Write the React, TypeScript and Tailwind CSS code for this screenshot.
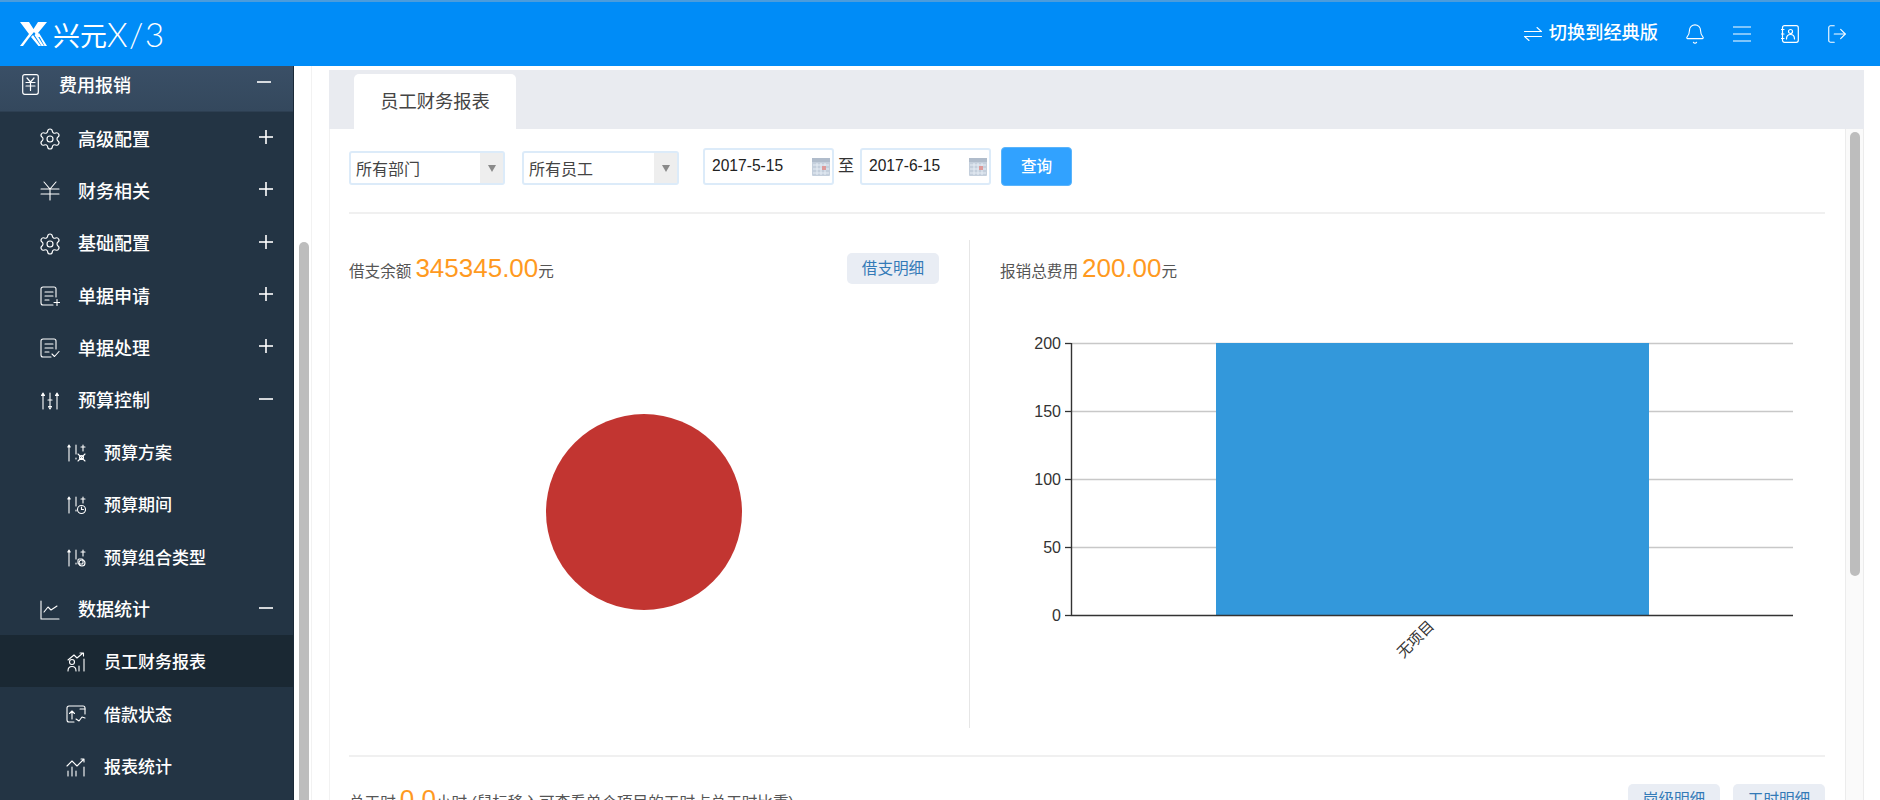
import { Bell, LogOut, Settings } from "lucide-react";
import type { ReactNode } from "react";

const Ico = ({ children, w = 20, h = 20 }: { children: ReactNode; w?: number; h?: number }) => (
  <svg width={w} height={h} viewBox="0 0 20 20" fill="none" stroke="currentColor" strokeWidth="1.1" strokeLinecap="round" strokeLinejoin="round" className="shrink-0">
    {children}
  </svg>
);

const Gear = () => <Settings size={24} strokeWidth={1.15} className="shrink-0" />;
const Yen = () => (
  <Ico>
    <path d="M4 1l6 7 6-7M1 8h18M1 13h18M10 8v11" />
  </Ico>
);
const DocPlus = () => (
  <Ico>
    <path d="M16 11V3a2 2 0 0 0-2-2H3a2 2 0 0 0-2 2v14a2 2 0 0 0 2 2h10" />
    <path d="M5 6h8M5 10h8M5 14h4M14 16.500h6M17 13.500v6" />
  </Ico>
);
const DocCheck = () => (
  <Ico>
    <path d="M16 11V3a2 2 0 0 0-2-2H3a2 2 0 0 0-2 2v14a2 2 0 0 0 2 2h8" />
    <path d="M5 6h8M5 10h8M5 14h4M12 16l2.500 2.500L19 13.500" />
  </Ico>
);
const Sliders = () => (
  <Ico>
    <path d="M3 5v13M1.500 4.500 3 2l1.500 2.500zM10 2v13M8.500 15.500 10 18l1.500-2.500zM17 5v13M15.500 4.500 17 2l1.500 2.500z" />
    <path d="M8 9h4" />
  </Ico>
);
const SubBase = ({ children }: { children: ReactNode }) => (
  <Ico>
    <path d="M3 4v14M1.800 4 3 2l1.200 2zM10 2v9M10 15v1" />
    {children}
  </Ico>
);
const SliderX = () => (
  <SubBase>
    <path d="M17 2v6M15 4h4M12 11l7 7M19 11l-7 7" />
    <circle cx="15.500" cy="14.500" r="2" />
  </SubBase>
);
const SliderClock = () => (
  <SubBase>
    <path d="M17 2v6M15 4h4M15.500 12v2.500h2" />
    <circle cx="15.500" cy="14.500" r="4" />
  </SubBase>
);
const SliderBox = () => (
  <SubBase>
    <path d="M17 2v6M15 4h4" />
    <rect x="12" y="11" width="5" height="5" rx="1" />
    <circle cx="16" cy="15" r="3" />
  </SubBase>
);
const LineChart = () => (
  <Ico>
    <path d="M1 1v18h18M4 12l4-5 3 3 6-4" />
  </Ico>
);
const PeopleChart = () => (
  <Ico>
    <circle cx="6" cy="10" r="2.500" />
    <path d="M2 19c0-3 2-4.500 4-4.500s4 1.500 4 4.500M2 8l6-5 3 3 6-5M14 1h3.500v3M13 14v5M18 7v12" />
  </Ico>
);
const LoanChart = () => (
  <Ico>
    <path d="M19 10V4a2 2 0 0 0-2-2H3a2 2 0 0 0-2 2v12a2 2 0 0 0 2 2h5" />
    <path d="M6 15V7M3.500 9.500 6 7l2.500 2.500M10 15l3 2 3-4 3 1M14 5h5" />
  </Ico>
);
const BarsChart = () => (
  <Ico>
    <path d="M1 9l5-5 5 5 6-6M15 2h3v3M2 14v5M6 10v9M10 14v5M18 10v9" />
  </Ico>
);
const FeeBox = () => (
  <svg width="17" height="21" viewBox="0 0 17 21" fill="none" stroke="currentColor" strokeWidth="1.200" strokeLinecap="round" strokeLinejoin="round" className="shrink-0">
    <rect x="0.700" y="0.700" width="15.600" height="19.600" rx="2" />
    <path d="M5 4l3.500 4L12 4M4 8.500h9M4 12h9M8.500 8.500V16.500" />
  </svg>
);

type NavItem = { label: string; icon: ReactNode; mark?: "+" | "-"; sub?: boolean; active?: boolean };

const navItems: NavItem[] = [
  { label: "高级配置", icon: <Gear />, mark: "+" },
  { label: "财务相关", icon: <Yen />, mark: "+" },
  { label: "基础配置", icon: <Gear />, mark: "+" },
  { label: "单据申请", icon: <DocPlus />, mark: "+" },
  { label: "单据处理", icon: <DocCheck />, mark: "+" },
  { label: "预算控制", icon: <Sliders />, mark: "-" },
  { label: "预算方案", icon: <SliderX />, sub: true },
  { label: "预算期间", icon: <SliderClock />, sub: true },
  { label: "预算组合类型", icon: <SliderBox />, sub: true },
  { label: "数据统计", icon: <LineChart />, mark: "-" },
  { label: "员工财务报表", icon: <PeopleChart />, sub: true, active: true },
  { label: "借款状态", icon: <LoanChart />, sub: true },
  { label: "报表统计", icon: <BarsChart />, sub: true },
];

const Mark = ({ type }: { type: "+" | "-" }) => (
  <svg width="14" height="14" viewBox="0 0 14 14" stroke="currentColor" strokeWidth="1.600" className="shrink-0 -translate-y-[1px]">
    <path d="M0 7h14" />
    {type === "+" && <path d="M7 0v14" />}
  </svg>
);

const Sidebar = () => (
  <aside className="w-[294px] shrink-0 bg-[#233444] border-r border-[#1b2a38] text-white overflow-hidden">
    <div className="h-[46px] flex items-center pl-[22px] pr-[22px] pb-[9px] bg-gradient-to-b from-[#3a4f66] to-[#34485d] border-b border-[#2d3f52]">
      <FeeBox />
      <span className="ml-[20px] text-[18px] font-medium flex-1 translate-y-[2px]">费用报销</span>
      <span className="-translate-y-[1px]">
        <Mark type="-" />
      </span>
    </div>
    {navItems.map((item) => (
      <div
        key={item.label}
        className={`h-[52.3px] flex items-center pr-[20px] ${item.sub ? "pl-[66px]" : "pl-[40px]"} ${item.active ? "bg-[#1a2833]" : ""}`}
      >
        <span className="w-[20px] flex justify-center translate-y-[1px]">{item.icon}</span>
        <span className={`font-medium flex-1 translate-y-[2px] ml-[18px] ${item.sub ? "text-[17px]" : "text-[18px]"}`}>
          {item.label}
        </span>
        {item.mark && <Mark type={item.mark} />}
      </div>
    ))}
  </aside>
);

const Header = () => (
  <header className="h-[66px] shrink-0 bg-[#008cf7] border-t-2 border-[#4b9cdc] flex items-center text-white pl-[20px] pr-[32px]">
    <svg width="27" height="24" viewBox="0 0 27 24" fill="white" className="shrink-0">
      <path d="M0 0h9l4.500 7L18 0h9l-9 11 3 4-3 0-4-5-5 6-6 8H0l9-12z" />
      <path d="M11 15l2-2 8 11h-2.500zM14.500 13l1.500-1.500L24 24h-2.500zM18 12l1-1 8 13h-2.500z" />
    </svg>
    <div className="ml-[6px] leading-none flex items-center">
      <span className="font-['Noto_Sans_CJK_SC',sans-serif] font-normal text-[27px]">兴元</span>
      <span className="font-['Lato',sans-serif] font-light text-[33px] tracking-[1.500px]">X/3</span>
    </div>
    <div className="ml-auto flex items-center">
      <svg width="18" height="16" viewBox="0 0 18 16" fill="none" stroke="currentColor" strokeWidth="1.100" strokeLinecap="round">
        <path d="M0.500 5.500H17.500L13 1.500M17.500 10.500H0.500L5 14.500" />
      </svg>
      <span className="ml-[7px] text-[18.200px] font-medium">切换到经典版</span>
      <Bell size={22} strokeWidth={1.2} className="ml-[26px]" />
      <svg width="18" height="16" viewBox="0 0 18 16" stroke="currentColor" strokeWidth="1.200" className="ml-[27px]">
        <path d="M0 1h18M0 8h18M0 15h18" />
      </svg>
      <svg width="18" height="18" viewBox="0 0 18 18" fill="none" stroke="currentColor" strokeWidth="1.200" strokeLinecap="round" className="ml-[30px]">
        <rect x="1.500" y="0.700" width="15.800" height="16.600" rx="2" />
        <path d="M0 4.500h3M0 9h3M0 13.500h3" />
        <circle cx="9.500" cy="6.500" r="2" />
        <path d="M5.500 14c0-3 2-4.500 4-4.500s4 1.500 4 4.500" />
      </svg>
      <LogOut size={22} strokeWidth={1.2} className="ml-[27px]" />
    </div>
  </header>
);

const SelectBox = ({ label, w }: { label: string; w: string }) => (
  <div className={`${w} h-[34px] mt-[4px] flex border-2 border-[#dcebf9] rounded-[3px] text-[16px] text-[#444]`}>
    <span className="flex-1 pl-[5px] leading-[34px]">{label}</span>
    <span className="w-[23px] bg-[#eeeeee] flex items-center justify-center">
      <svg width="8" height="7" viewBox="0 0 8 7" fill="#8a8a8a">
        <path d="M0 0h8L4 7z" />
      </svg>
    </span>
  </div>
);

const DateBox = ({ value }: { value: string }) => (
  <div className="w-[131px] h-[37px] mt-[1px] flex items-center justify-between border-2 border-[#dcebf9] rounded-[3px] pl-[7px] pr-[2px] text-[15.600px] text-[#222]">
    <span className="-translate-y-[1px]">{value}</span>
    <svg width="18" height="18" viewBox="0 0 18 18">
      <rect x="0" y="0" width="18" height="18" rx="1" fill="#c4cfdc" />
      <rect x="0" y="0" width="18" height="4" fill="#b0bccb" />
      <path d="M1 7h16M1 11h16M1 15h16M5 5v12M9 5v12M13 5v12" stroke="#e6edf5" strokeWidth="1" />
      <rect x="10" y="8" width="4" height="4" fill="#dd9a9a" />
    </svg>
  </div>
);

const Filters = () => (
  <div className="flex items-start">
    <SelectBox label="所有部门" w="w-[156px]" />
    <span className="w-[17px]" />
    <SelectBox label="所有员工" w="w-[157px]" />
    <span className="w-[24px]" />
    <DateBox value="2017-5-15" />
    <span className="w-[26px] pl-[4px] mt-[7px] text-[16px] text-[#333]">至</span>
    <DateBox value="2017-6-15" />
    <button className="ml-[10px] w-[71px] h-[39px] rounded-[4px] bg-[#31a2ff] border border-[#5ab4fb] text-white text-[15.600px] font-medium">
      查询
    </button>
  </div>
);

const SoftButton = ({ label }: { label: string }) => (
  <span className="w-[92px] h-[31px] rounded-[5px] bg-[#e9edf4] text-[#337ab7] text-[15.600px] flex items-center justify-center shrink-0">
    {label}
  </span>
);

const Stat = ({ before, value, after }: { before: string; value: string; after: string }) => (
  <div className="flex items-baseline text-[15.600px] text-[#555] whitespace-nowrap">
    <span>{before}</span>
    <span className="text-[26px] text-[#ff9a1f] ml-[4px]">{value}</span>
    <span>{after}</span>
  </div>
);

const BarChart = () => (
  <svg width="825" height="400" viewBox="0 0 825 400" className="block mt-[16px] font-['Liberation_Sans',sans-serif]">
    {[43, 111, 179, 247].map((y) => (
      <path key={y} d={`M71 ${y + 0.5}H793`} stroke="#c8c8c8" strokeWidth="1.300" />
    ))}
    <rect x="216" y="43" width="433" height="272" fill="#3398db" />
    <path d="M71.500 43v272.500H793" fill="none" stroke="#333" strokeWidth="1.400" />
    {[
      [43, "200"],
      [111, "150"],
      [179, "100"],
      [247, "50"],
      [315, "0"],
    ].map(([y, t]) => (
      <g key={t as string}>
        <path d={`M65 ${Number(y) + 0.5}H71`} stroke="#333" strokeWidth="1.300" />
        <text x="61" y={Number(y) + 5.500} textAnchor="end" fontSize="16" fill="#333">
          {t}
        </text>
      </g>
    ))}
    <text
      transform="translate(435 327) rotate(-45)"
      textAnchor="end"
      fontSize="15"
      fill="#333"
      fontFamily="'Noto Sans CJK SC',sans-serif"
    >
      无项目
    </text>
  </svg>
);

const Report = () => (
  <div className="flex-1 min-w-0 pl-[19px] pr-[20px] pt-[18px]">
    <Filters />
    <div className="h-[2px] bg-[#f0f0f0] mt-[26px]" />
    <div className="flex mt-[26px] h-[488px]">
      <div className="w-[621px] shrink-0 border-r border-[#e6e6e6] pr-[30px] pt-[13px]">
        <div className="h-[31px] flex items-center justify-between">
          <Stat before="借支余额" value="345345.00" after="元" />
          <SoftButton label="借支明细" />
        </div>
        <div className="flex justify-center mt-[130px]">
          <svg width="196" height="196" viewBox="0 0 196 196">
            <circle cx="98" cy="98" r="98" fill="#c23531" />
          </svg>
        </div>
      </div>
      <div className="flex-1 min-w-0 pl-[30px] pt-[13px]">
        <div className="h-[31px] flex items-center">
          <Stat before="报销总费用" value="200.00" after="元" />
        </div>
        <BarChart />
      </div>
    </div>
    <div className="h-[2px] bg-[#f0f0f0] mt-[27px]" />
    <div className="h-[31px] flex items-center justify-between mt-[27px]">
      <Stat before="总工时" value="0.0" after="小时 (鼠标移入可查看单个项目的工时占总工时比重)" />
      <div className="flex gap-[13px]">
        <SoftButton label="岗级明细" />
        <SoftButton label="工时明细" />
      </div>
    </div>
  </div>
);

export default function App() {
  return (
    <div className="h-[800px] flex flex-col overflow-hidden bg-white font-['Liberation_Sans','Noto_Sans_CJK_SC',sans-serif]">
      <Header />
      <div className="flex-1 min-h-0 flex">
        <Sidebar />
        {/* sidebar scrollbar */}
        <div className="w-[18px] shrink-0 pt-[176px] border-r border-[#f2f2f2] flex">
          <div className="ml-[5px] w-[10px] bg-[#bdbdbd] rounded-t-full" />
        </div>
        <main className="flex-1 min-w-0 flex flex-col pt-[4px] pl-[17px] pr-[16px]">
          <div className="h-[59px] shrink-0 bg-[#e9ebf0] pl-[25px] pt-[4px]">
            <div className="w-[162px] h-[55px] bg-white rounded-t-[5px] flex items-center justify-center text-[18.300px] text-[#444]">
              员工财务报表
            </div>
          </div>
          <div className="flex-1 min-h-0 flex border-l border-[#f2f2f2]">
            <Report />
            {/* page scrollbar */}
            <div className="w-[19px] shrink-0 bg-[#fafafa] border-x border-[#ececec] pt-[3px]">
              <div className="ml-[4px] w-[10px] h-[444px] bg-[#bdbdbd] rounded-full" />
            </div>
          </div>
        </main>
      </div>
    </div>
  );
}
